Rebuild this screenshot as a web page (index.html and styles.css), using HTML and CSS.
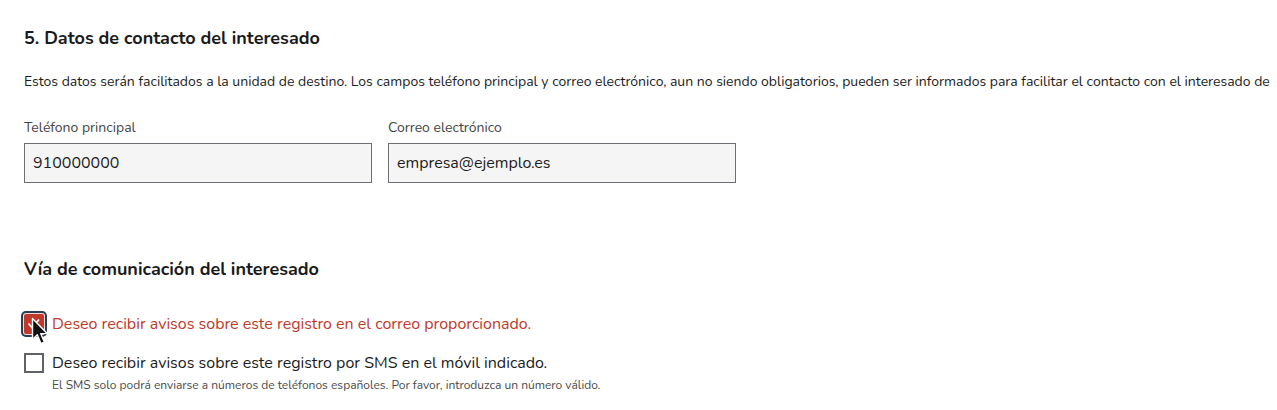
FILE: index.html
```html
<!DOCTYPE html>
<html lang="es">
<head>
<meta charset="utf-8">
<link rel="stylesheet" href="styles.css">
</head>
<body>
<main class="page">
  <section class="section">
    <h2 class="title">5. Datos de contacto del interesado</h2>
    <p class="intro">Estos datos serán facilitados a la unidad de destino. Los campos teléfono principal y correo electrónico, aun no siendo obligatorios, pueden ser informados para facilitar el contacto con el interesado de</p>
    <div class="fields">
      <div class="field">
        <label class="label">Teléfono principal</label>
        <div class="input">910000000</div>
      </div>
      <div class="field">
        <label class="label">Correo electrónico</label>
        <div class="input">empresa@ejemplo.es</div>
      </div>
    </div>
  </section>
  <section class="section section-2">
    <h2 class="title">Vía de comunicación del interesado</h2>
    <div class="options">
      <div class="option">
        <span class="box-wrap">
          <span class="box box-checked">
            <svg class="check" width="16" height="16" viewBox="0 0 16 16"><path d="M2.5 7.5 L6 11.5 L13 3.5" fill="none" stroke="#fff" stroke-width="1.8"/></svg>
          </span>
          <svg class="cursor" width="18" height="29" viewBox="0 0 18 29"><path d="M1.5 1.5 L1.5 22.5 L6.3 17.8 L9.9 26.6 L13.3 25.1 L9.7 16.6 L16.2 16.4 Z" fill="#111" stroke="#fff" stroke-width="1.4" stroke-linejoin="round"/></svg>
        </span>
        <span class="opt-text red">Deseo recibir avisos sobre este registro en el correo proporcionado.</span>
      </div>
      <div class="option">
        <span class="box-wrap"><span class="box"></span></span>
        <div class="opt-body">
          <span class="opt-text">Deseo recibir avisos sobre este registro por SMS en el móvil indicado.</span>
          <span class="hint">El SMS solo podrá enviarse a números de teléfonos españoles. Por favor, introduzca un número válido.</span>
        </div>
      </div>
    </div>
  </section>
</main>
</body>
</html>
```
FILE: styles.css
```css
html, body {
  margin: 0;
  padding: 0;
  background: #fff;
  overflow: hidden;
}
body {
  font-family: "Nunito", "Lato", "Open Sans", sans-serif;
  color: #1c1c1c;
}
.page {
  padding: 26px 0 0 24px;
  width: 1253px;
  overflow: hidden;
}
.title {
  margin: 0;
  font-size: 18px;
  font-weight: 700;
  line-height: 24px;
  color: #1a1a1a;
}
.intro {
  margin: 23px 0 0 0;
  font-size: 14px;
  line-height: 18px;
  white-space: nowrap;
  color: #1c1c1c;
}
.fields {
  display: flex;
  gap: 16px;
  margin-top: 28px;
}
.field {
  display: flex;
  flex-direction: column;
}
.label {
  font-size: 14px;
  line-height: 18px;
  color: #444;
  margin-bottom: 6px;
}
.input {
  box-sizing: border-box;
  width: 348px;
  height: 40px;
  border: 1px solid #6b6e72;
  background: #f5f5f5;
  font-size: 16px;
  line-height: 38px;
  padding: 0 8px;
  color: #1c1c1c;
}
.section-2 {
  margin-top: 74px;
}
.options {
  margin-top: 32px;
  display: flex;
  flex-direction: column;
  gap: 17px;
}
.option {
  display: flex;
  align-items: flex-start;
  gap: 8px;
}
.box-wrap {
  position: relative;
  width: 20px;
  height: 20px;
  flex: none;
  margin-top: 1px;
}
.box {
  display: block;
  position: relative;
  box-sizing: border-box;
  width: 20px;
  height: 20px;
  border: 2px solid #5f6266;
  background: #fff;
}
.box-checked {
  border-color: #c0392b;
  background: #c0392b;
  border-radius: 1px;
  box-shadow: 0 0 0 1px #f2dcd9, 0 0 0 3px #2a3f55;
  border-radius: 2px;
}
.check {
  display: block;
}
.cursor {
  position: absolute;
  left: 7px;
  top: 3px;
}
.opt-body {
  display: flex;
  flex-direction: column;
}
.opt-text {
  font-size: 16px;
  line-height: 22px;
  color: #1c1c1c;
}
.opt-text.red {
  color: #c0392b;
}
.hint {
  margin-top: 4px;
  font-size: 12px;
  line-height: 15px;
  color: #4a4a4a;
}
```
